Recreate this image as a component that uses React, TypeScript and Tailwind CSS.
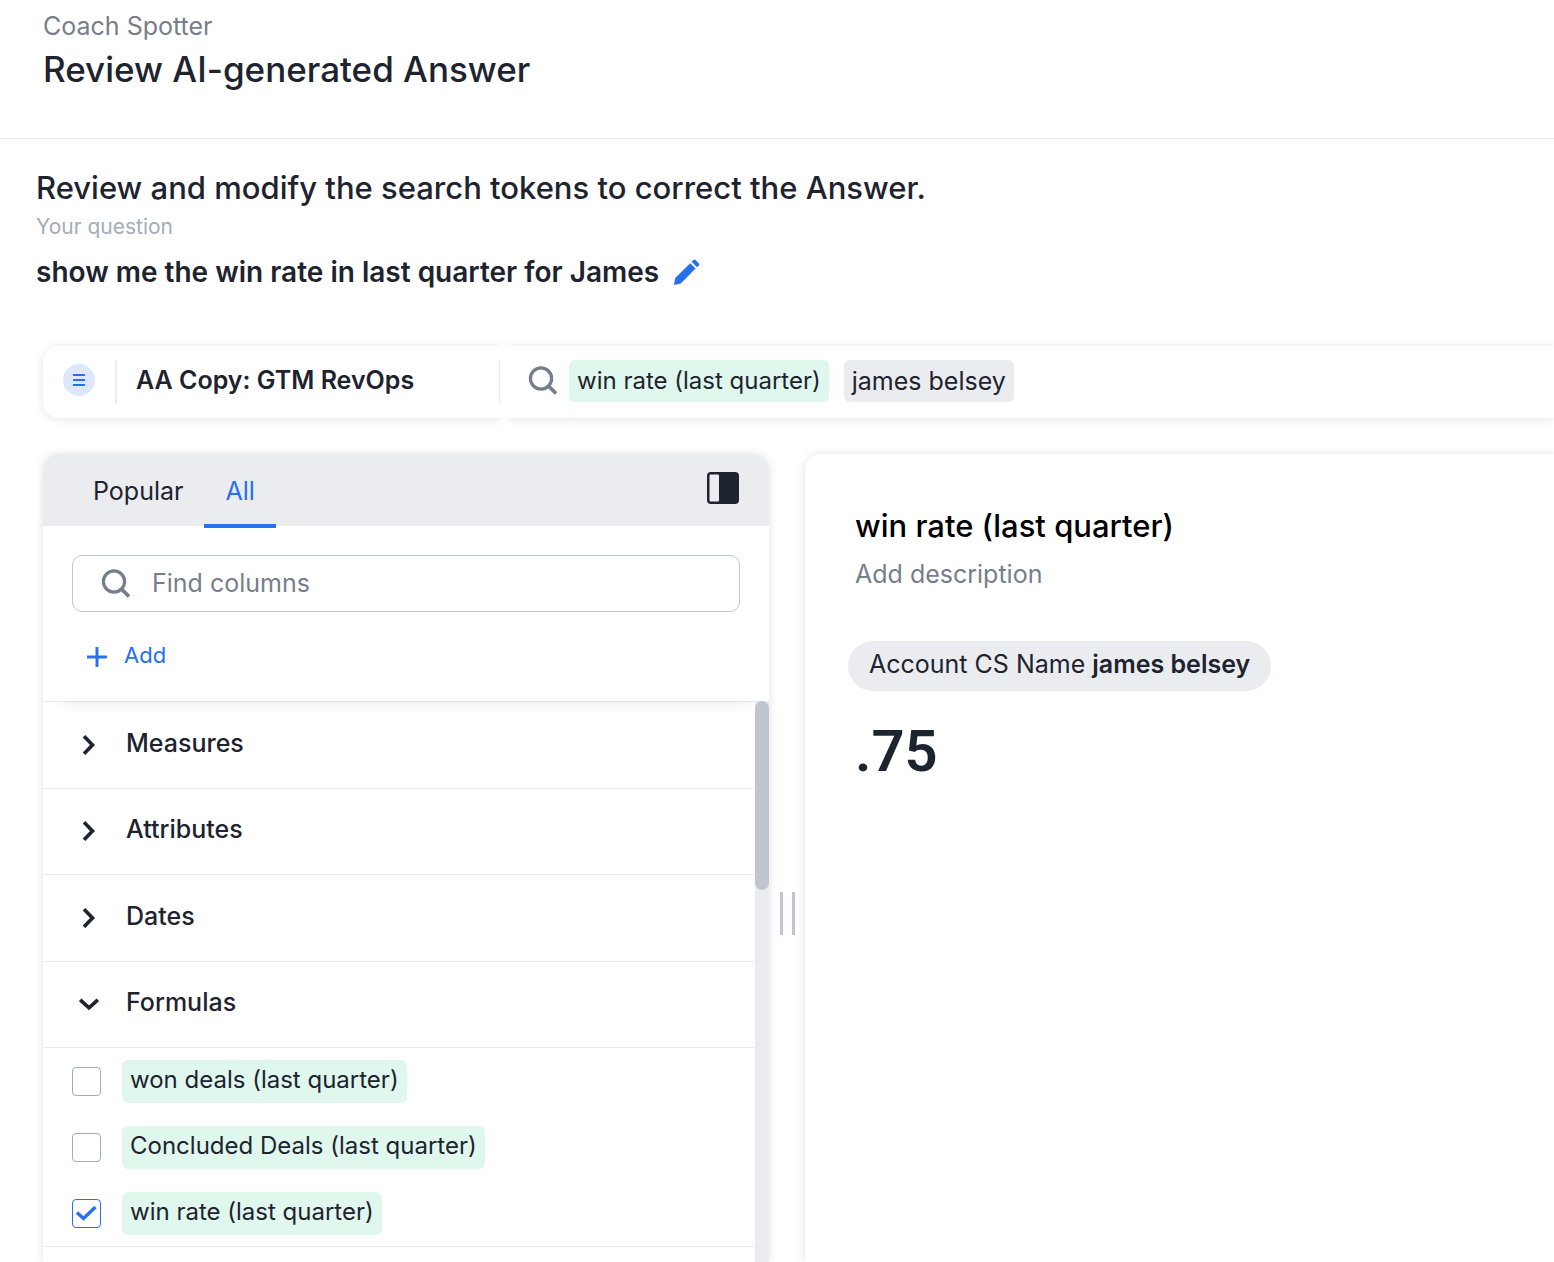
import React, { useState } from "react";
import { Plus } from "lucide-react";

const groups = ["Measures", "Attributes", "Dates", "Formulas"];
const formulas = [
  "won deals (last quarter)",
  "Concluded Deals (last quarter)",
  "win rate (last quarter)",
];

function SearchIcon() {
  return (
    <svg width="30" height="30" viewBox="0 0 30 30" fill="none" stroke="#777e8b" strokeWidth="3.2" className="shrink-0">
      <circle cx="13" cy="12.5" r="10.6" />
      <path d="M20.5 20L28 27.5" strokeWidth="3.8" />
    </svg>
  );
}

function Chevron({ open }: { open: boolean }) {
  return (
    <svg width="20" height="20" viewBox="0 0 20 20" fill="none" stroke="#1d232f" strokeWidth="3.6" className="shrink-0">
      {open ? <path d="M1.2 5.8l8.8 8 8.8-8" /> : <path d="M5 1.2l8.5 8.8L5 18.8" />}
    </svg>
  );
}

function SearchBar() {
  return (
    <div className="relative ml-[43px] mt-[54px] flex h-[72px] rounded-l-2xl bg-white shadow-[0_1px_10px_rgba(0,0,0,0.11)]">
      <div className="flex w-[457px] shrink-0 items-center pl-5">
        <button aria-label="Data source menu" className="mb-1 flex size-8 items-center justify-center rounded-full bg-[#dee7fb]">
          <svg width="12" height="12" viewBox="0 0 12 12" fill="#2770ef">
            <path d="M0 0h12v2H0zM0 5h12v2H0zM0 10h12v2H0z" />
          </svg>
        </button>
        <div className="ml-5 h-11 w-[2px] bg-[#ebecf0]" />
        <span className="ml-[19px] grow pb-[2px] text-[25px] font-semibold">AA Copy: GTM RevOps</span>
        <div className="h-11 w-px bg-[#ebecf0]" />
      </div>
      <div className="flex grow items-center pb-[2px] pl-7">
        <SearchIcon />
        <span className="ml-[11px] h-[42px] rounded-md bg-[#e0f7ed] px-2 text-[24px] leading-[42px]">win rate (last quarter)</span>
        <span className="ml-[15px] h-[42px] rounded-md bg-[#ebecf0] px-2 text-[25px] leading-[42px]">james belsey</span>
      </div>
      {/* fades the shadow out between the two halves */}
      <div className="absolute -top-3 left-[454px] h-3 w-4 bg-linear-to-r from-transparent via-white to-transparent" />
      <div className="absolute -bottom-3 left-[454px] h-3 w-4 bg-linear-to-r from-transparent via-white to-transparent" />
    </div>
  );
}

function ColumnPanel() {
  const [checked, setChecked] = useState(["win rate (last quarter)"]);

  const toggle = (name: string) =>
    setChecked(checked.includes(name) ? checked.filter((c) => c !== name) : [...checked, name]);

  return (
    <section className="flex w-[726px] shrink-0 flex-col rounded-t-2xl bg-white shadow-[0_0_10px_rgba(0,0,0,0.12)]">
      <div className="flex h-[72px] items-center rounded-t-2xl bg-[#ebecf0] pl-[29px] pr-[30px]">
        <button className="h-[72px] px-[21px] pt-[3px] text-[25px]">Popular</button>
        <button className="relative h-[72px] px-[21px] pt-[3px] text-[25px] text-[#2770ef]">
          All
          <span className="absolute -bottom-[2px] left-0 h-1 w-full bg-[#2770ef]" />
        </button>
        <button aria-label="Collapse panel" className="mb-1 ml-auto">
          <svg width="32" height="32" viewBox="0 0 32 32">
            <rect width="32" height="32" rx="4" fill="#1d232f" />
            <rect x="2.5" y="2.5" width="9.5" height="27" rx="1" fill="#ebecf0" />
          </svg>
        </button>
      </div>
      <div className="z-10 h-[175px] px-[29px] pt-[29px] shadow-[0_18px_14px_-18px_rgba(29,35,47,0.12)]">
        <label className="flex h-[57px] items-center rounded-[10px] border border-[#c0c6cf] pl-7">
          <SearchIcon />
          <input
            type="text"
            aria-label="Find columns"
            placeholder="Find columns"
            className="ml-[21px] w-full bg-transparent text-[25px] outline-none placeholder:text-[#777e8b]"
          />
        </label>
        <button className="ml-2 mt-[27px] flex items-center text-[22px] text-[#2770ef]">
          <Plus size={34} strokeWidth={2.1} strokeLinecap="butt" />
          <span className="ml-[10px] pb-[3px]">Add</span>
        </button>
      </div>
      <div className="flex grow">
        <div className="grow">
          <div className="grid h-[346px] grid-rows-4">
            {groups.map((g) => (
              <button key={g} className="flex items-center border-t border-[#ebecf0] pl-9 text-left text-[25px] font-medium">
                <Chevron open={g === "Formulas"} />
                <span className="ml-[27px] pb-[3px]">{g}</span>
              </button>
            ))}
          </div>
          <div className="border-y border-[#ebecf0]">
            {formulas.map((f) => (
              <label key={f} className="flex h-[66px] items-center pl-[29px]">
                <input type="checkbox" className="peer sr-only" checked={checked.includes(f)} onChange={() => toggle(f)} />
                <span className="flex size-[29px] items-center justify-center rounded border border-[#a5acb9] peer-checked:border-[#2770ef]">
                  {checked.includes(f) && (
                    <svg width="21" height="17" viewBox="0 0 21 17" fill="none" stroke="#2770ef" strokeWidth="3.4">
                      <path d="M1 7.5l6.5 6L19.5 2" />
                    </svg>
                  )}
                </span>
                <span className="ml-[21px] h-[43px] rounded-md bg-[#e0f7ed] px-2 text-[24px] leading-[39px]">{f}</span>
              </label>
            ))}
          </div>
        </div>
        <div className="w-[14px] shrink-0 bg-[#ebecf0]">
          <div className="relative z-20 h-[189px] rounded-full bg-[#c0c6cf]" />
        </div>
      </div>
    </section>
  );
}

export default function App() {
  return (
    <div className="flex min-h-screen flex-col overflow-hidden bg-white font-['Inter','Liberation_Sans',sans-serif] text-[#1d232f]">
      <header className="h-[139px] border-b border-[#ebecf0] pl-[43px] pt-[10px]">
        <p className="text-[25px] leading-8 text-[#777e8b]">Coach Spotter</p>
        <h1 className="mt-[3px] text-[35px] font-medium leading-[48px]">Review AI-generated Answer</h1>
      </header>
      <main className="flex grow flex-col">
        <div className="pl-9 pt-7">
          <h2 className="text-[31px] font-medium leading-[42px]">Review and modify the search tokens to correct the Answer.</h2>
          <p className="mt-1 text-[21px] leading-7 text-[#a5acb9]">Your question</p>
          <div className="mt-[11px] flex items-center">
            <p className="text-[28px] font-semibold leading-10">show me the win rate in last quarter for James</p>
            <button aria-label="Edit question" className="ml-[14px]">
              <svg width="27" height="27" viewBox="0 0 27 27" fill="#2770ef">
                <path d="M1 26l1.2-7L17.2 4.2l5.4 5.4L7.8 24.4z" />
                <path d="M18.6 2.8l1.9-1.8a1.5 1.5 0 0 1 2 0l3.4 3.4a1.5 1.5 0 0 1 0 2L24 8.2z" />
              </svg>
            </button>
          </div>
        </div>
        <SearchBar />
        <div className="ml-[43px] mt-9 flex grow">
          <ColumnPanel />
          <div className="mt-[438px] flex h-[43px] w-9 shrink-0 justify-center gap-[9px]">
            <div className="w-[3px] bg-[#c0c6cf]" />
            <div className="w-[3px] bg-[#c0c6cf]" />
          </div>
          <section className="grow rounded-tl-2xl bg-white pl-[50px] pt-[51px] shadow-[0_0_10px_rgba(0,0,0,0.12)]">
            <h3 className="text-[31px] font-medium leading-[42px] text-black">win rate (last quarter)</h3>
            <p className="mt-[11px] text-[25px] leading-8 text-[#777e8b]">Add description</p>
            <div className="-ml-[7px] mt-[51px] h-[50px] w-fit rounded-full bg-[#ebecf0] px-[21px] text-[25px] leading-[46px]">
              Account CS Name <b className="font-semibold">james belsey</b>
            </div>
            <p className="mt-6 font-['Roboto','Inter',sans-serif] text-[58px] font-semibold leading-[72px]">.75</p>
          </section>
        </div>
      </main>
    </div>
  );
}
